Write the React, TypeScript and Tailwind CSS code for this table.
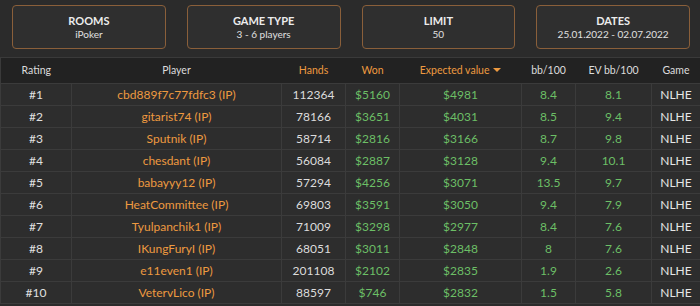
import React from 'react';

const filters = [
  { label: 'ROOMS', value: 'iPoker' },
  { label: 'GAME TYPE', value: '3 - 6 players' },
  { label: 'LIMIT', value: '50' },
  { label: 'DATES', value: '25.01.2022 - 02.07.2022' },
];

const rows = [
  ['#1', 'cbd889f7c77fdfc3 (IP)', '112364', '$5160', '$4981', '8.4', '8.1'],
  ['#2', 'gitarist74 (IP)', '78166', '$3651', '$4031', '8.5', '9.4'],
  ['#3', 'Sputnik (IP)', '58714', '$2816', '$3166', '8.7', '9.8'],
  ['#4', 'chesdant (IP)', '56084', '$2887', '$3128', '9.4', '10.1'],
  ['#5', 'babayyy12 (IP)', '57294', '$4256', '$3071', '13.5', '9.7'],
  ['#6', 'HeatCommittee (IP)', '69803', '$3591', '$3050', '9.4', '7.9'],
  ['#7', 'Tyulpanchik1 (IP)', '71009', '$3298', '$2977', '8.4', '7.6'],
  ['#8', 'IKungFuryI (IP)', '68051', '$3011', '$2848', '8', '7.6'],
  ['#9', 'e11even1 (IP)', '201108', '$2102', '$2835', '1.9', '2.6'],
  ['#10', 'VetervLico (IP)', '88597', '$746', '$2832', '1.5', '5.8'],
];

const widths = ['w-[71px]', 'w-[210px]', 'w-[64px]', 'w-[54px]', 'w-[122px]', 'w-[54px]', 'w-[76px]', 'w-[49px]'];

export default function App() {
  return (
    <div className="w-[700px] h-[306px] overflow-hidden bg-[#2b2b2b] font-['Lato','Liberation_Sans',sans-serif] text-[#dcdcdc]">
      <div className="grid grid-cols-4 gap-[21px] pl-3 pr-[10px] pt-[5px]">
        {filters.map((f) => (
          <div
            key={f.label}
            className="h-[44px] rounded-[4px] border border-[#8a5f3a] bg-[#2f2f2f] flex flex-col items-center justify-center pt-[1px]"
          >
            <div className="text-[11px] font-bold leading-[14px] text-[#ececec]">{f.label}</div>
            <div className="text-[10px] leading-[13px] text-[#e0e0e0]">{f.value}</div>
          </div>
        ))}
      </div>

      <table className="mt-[8px] w-[700px] table-fixed border-collapse text-center">
        <colgroup>
          {widths.map((w, i) => (
            <col key={i} className={w} />
          ))}
        </colgroup>
        <thead>
          <tr className="h-[26px] bg-[#222222] text-[10.5px] border-t border-l border-[#3a3a3a]">
            <th className="font-normal text-[#dcdcdc]">Rating</th>
            <th className="font-normal text-[#dcdcdc]">Player</th>
            <th className="font-normal text-[#ee9a40]">Hands</th>
            <th className="font-normal text-[#ee9a40]">Won</th>
            <th className="font-normal text-[#ee9a40]">
              Expected value <span className="inline-block align-middle ml-[1px] w-0 h-0 border-l-[4px] border-r-[4px] border-t-[4px] border-l-transparent border-r-transparent border-t-[#ee9a40] -mt-[2px]" />
            </th>
            <th className="font-normal text-[#dcdcdc]">bb/100</th>
            <th className="font-normal text-[#dcdcdc]">EV bb/100</th>
            <th className="font-normal text-[#dcdcdc]">Game</th>
          </tr>
        </thead>
        <tbody className="text-[12px]">
          {rows.map((r) => (
            <tr key={r[0]} className="h-[22px] bg-[#2d2d2d]">
              <td className="border border-[#3b3b3b] text-[#e0e0e0]">{r[0]}</td>
              <td className="border border-[#3b3b3b] text-[#ee9a40]">{r[1]}</td>
              <td className="border border-[#3b3b3b] text-[#dcdcdc]">{r[2]}</td>
              <td className="border border-[#3b3b3b] text-[#6cbf66]">{r[3]}</td>
              <td className="border border-[#3b3b3b] text-[#6cbf66]">{r[4]}</td>
              <td className="border border-[#3b3b3b] text-[#6cbf66]">{r[5]}</td>
              <td className="border border-[#3b3b3b] text-[#6cbf66]">{r[6]}</td>
              <td className="border border-[#3b3b3b] text-[#e6e6e6]">NLHE</td>
            </tr>
          ))}
        </tbody>
      </table>
    </div>
  );
}
